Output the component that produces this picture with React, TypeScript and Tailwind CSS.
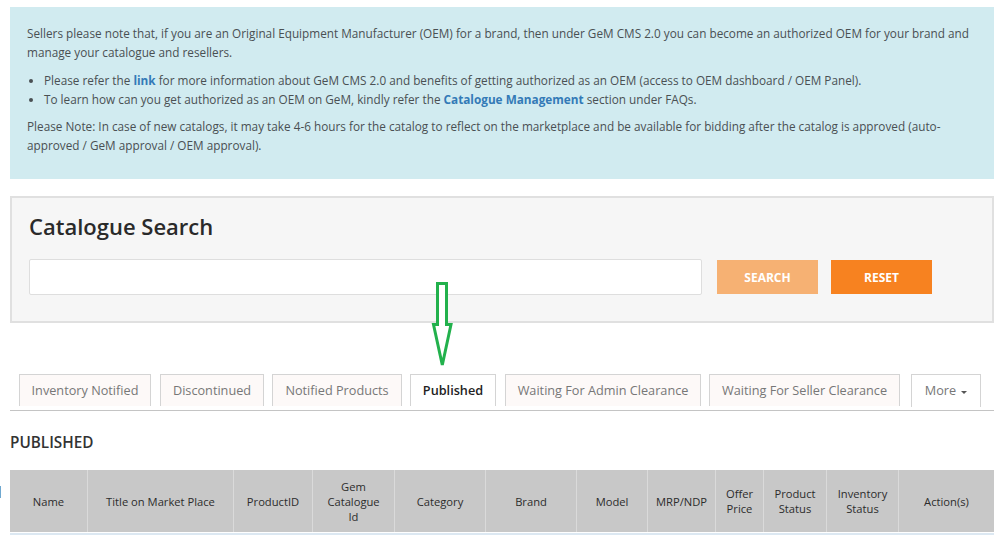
import React from "react";

const tabs: [string, number, number, boolean?][] = [
  ["Inventory Notified", 132, 9],
  ["Discontinued", 104, 8],
  ["Notified Products", 130, 8],
  ["Published", 86, 9, true],
  ["Waiting For Admin Clearance", 196, 8],
  ["Waiting For Seller Clearance", 191, 11],
];

const cols: [string[], number][] = [
  [["Name"], 78],
  [["Title on Market Place"], 146],
  [["ProductID"], 79],
  [["Gem", "Catalogue", "Id"], 82],
  [["Category"], 91],
  [["Brand"], 91],
  [["Model"], 71],
  [["MRP/NDP"], 68],
  [["Offer", "Price"], 48],
  [["Product", "Status"], 63],
  [["Inventory", "Status"], 72],
  [["Action(s)"], 95],
];

export default function App() {
  return (
    <div className="relative w-[1000px] h-[536px] overflow-hidden bg-white font-['Open_Sans',sans-serif] text-[#555]">
      <div className="ml-[10px] mt-[7px] w-[984px] h-[172px] bg-[#d1ebf0] pl-[17px] pr-[17px] pt-[17px] text-[11.77px] leading-[19px] text-[#4a5053]">
        <p>
          Sellers please note that, if you are an Original Equipment Manufacturer (OEM) for a brand, then under GeM CMS 2.0 you can become an authorized OEM for your brand and manage your catalogue and resellers.
        </p>
        <ul className="mt-[9px] list-disc pl-[17px]">
          <li>
            Please refer the <a className="font-bold text-[#337ab7]">link</a> for more information about GeM CMS 2.0 and benefits of getting authorized as an OEM (access to OEM dashboard / OEM Panel).
          </li>
          <li>
            To learn how can you get authorized as an OEM on GeM, kindly refer the <a className="font-bold text-[#337ab7]">Catalogue Management</a> section under FAQs.
          </li>
        </ul>
        <p className="mt-[8px]">
          Please Note: In case of new catalogs, it may take 4-6 hours for the catalog to reflect on the marketplace and be available for bidding after the catalog is approved (auto-approved / GeM approval / OEM approval).
        </p>
      </div>

      <div className="ml-[10px] mt-[17px] w-[984px] h-[127px] border-2 border-[#e0e0e0] bg-[#f6f6f6] pl-[17px] pt-[12px]">
        <h2 className="text-[22px] leading-[32px] font-semibold text-[#2a2a2a]">Catalogue Search</h2>
        <div className="mt-[17px] flex items-center">
          <div className="h-[36px] w-[673px] rounded-[2px] border border-[#dedede] bg-white" />
          <button className="ml-[15px] h-[34px] w-[101px] bg-[#f6b173] pt-[1px] text-[12px] font-bold text-white">SEARCH</button>
          <button className="ml-[13px] h-[34px] w-[101px] bg-[#f78220] pt-[1px] text-[12px] font-bold text-white">RESET</button>
        </div>
      </div>

      <div className="ml-[10px] mt-[51px] flex h-[37px] w-[984px] items-start border-b border-[#c4c4c4] pl-[9px]">
        {tabs.map(([t, w, gap, active]) => (
          <div
            key={t}
            style={{ width: w, marginRight: gap }}
            className={`flex h-[32px] shrink-0 items-center justify-center border border-b-0 border-[#d4d4d4] text-[12.7px] ${active ? "bg-white font-semibold text-[#222]" : "bg-[#fdf9f8] text-[#777]"}`}
          >
            {t}
          </div>
        ))}
        <div className="flex h-[33px] w-[70px] shrink-0 items-center justify-center border border-b-0 border-[#d4d4d4] text-[12.7px] text-[#777]">
          More
          <span className="ml-[5px] mt-[2px] h-0 w-0 border-x-[3px] border-t-[3px] border-x-transparent border-t-[#555]" />
        </div>
      </div>

      <h3 className="ml-[10px] mt-[21px] text-[15.3px] leading-[20px] font-semibold text-[#333]">PUBLISHED</h3>

      <div className="ml-[10px] mt-[18px] flex h-[62px] w-[984px] bg-[#c8c8c8]">
        {cols.map(([lines, w], i) => (
          <div
            key={i}
            style={{ width: w }}
            className="flex flex-col items-center justify-center border-r border-[#dadada] text-center text-[11.2px] leading-[15px] font-medium text-[#2c2c2c] last:border-r-0"
          >
            {lines.map((l) => (
              <span key={l}>{l}</span>
            ))}
          </div>
        ))}
      </div>
      <div className="h-[1px] w-full bg-white" />
      <div className="ml-[10px] h-[2px] w-[984px] bg-[#dce8f2]" />

      <svg className="absolute left-[430px] top-[280px]" width="26" height="90" viewBox="0 0 26 90" fill="#fff" stroke="#22b14c" strokeWidth="3" strokeLinejoin="miter">
        <path d="M7.5 3.5 H16.5 V44.5 H21 L12.3 85 L3.5 44.5 H7.5 Z" />
      </svg>
      <div className="absolute left-0 top-[486px] h-[12px] w-[1px] bg-[#6fa8d0]" />
    </div>
  );
}
